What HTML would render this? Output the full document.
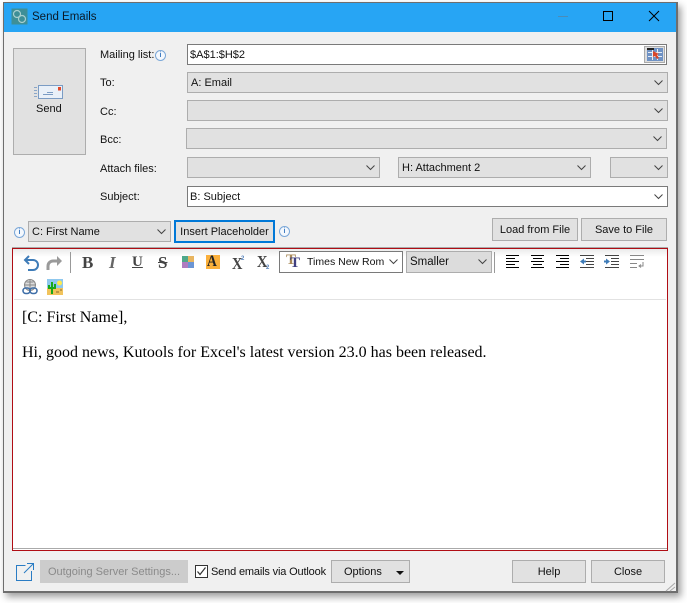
<!DOCTYPE html>
<html><head><meta charset="utf-8"><style>
html,body{margin:0;padding:0;background:#fff;width:687px;height:603px;overflow:hidden}
*{box-sizing:border-box}
body{font-family:"Liberation Sans",sans-serif;font-size:11px;color:#111;position:relative}
.a{position:absolute}
.t{position:absolute;white-space:nowrap;line-height:14px;height:14px}
.b{position:absolute;background:#e1e1e1;border:1px solid #adadad;white-space:nowrap;line-height:21px;padding-left:3px}
.w{background:#fff;border-color:#7a7a7a}
.c{text-align:center;padding:0}
.ch{position:absolute;right:4px;top:7px;width:9px;height:6px}
.i{position:absolute;width:11px;height:11px;border:1px solid #7aa7d8;border-radius:50%;background:#f4f8fd;color:#3a78c0;font:bold 7px/9px "Liberation Sans",sans-serif;text-align:center}
</style></head><body>
<!-- shadow -->
<div class="a" style="left:3px;top:2px;width:675px;height:591px;box-shadow:3px 4px 7px rgba(0,0,0,.38)"></div>
<!-- window -->
<div class="a" style="left:3px;top:2px;width:675px;height:591px;background:#f0f0f0;border:1px solid #6e6e6e;border-width:1px 2px 2px 1px"></div>
<div class="a" style="left:4px;top:3px;width:672px;height:29px;background:#27a5f4"></div>
<svg class="a" style="left:11px;top:8px" width="17" height="17" viewBox="0 0 17 17"><rect width="16" height="16" x=".5" y=".5" fill="#3e8f97"/><circle cx="6" cy="6" r="3.500" fill="none" stroke="#a9cfcf" stroke-width="1.200"/><circle cx="11" cy="11" r="3.500" fill="none" stroke="#a9cfcf" stroke-width="1.200"/></svg>
<div class="t" style="left:32px;top:10px;font-size:11.5px;color:#0a1a28">Send Emails</div>
<div class="a" style="left:558px;top:16px;width:10px;height:1px;background:#4a8cb8"></div>
<div class="a" style="left:603px;top:11px;width:10px;height:10px;border:1px solid #000"></div>
<svg class="a" style="left:648px;top:10px" width="12" height="12" viewBox="0 0 12 12"><path d="M1 1L11 11M11 1L1 11" stroke="#000" stroke-width="1" fill="none"/></svg>

<!-- Send -->
<div class="b c" style="left:13px;top:48px;width:73px;height:107px"></div>
<svg class="a" style="left:33px;top:84px" width="31" height="16" viewBox="0 0 31 16"><rect x="5.500" y="1.500" width="24" height="13" fill="#e9f0f8" stroke="#7b9cc4"/><path d="M10 10.500h10M14 8.500h6" stroke="#7b9cc4"/><rect x="25" y="3" width="3" height="3.500" fill="#e2492a"/><path d="M1 3.500h3M1 6.500h3M1 9.500h3M1 12.500h3" stroke="#8aa6c8"/></svg>
<div class="t" style="left:36px;top:101px;top:102px">Send</div>

<!-- labels -->
<div class="t" style="left:100px;top:48px">Mailing list:</div>
<div class="i" style="left:155px;top:50px">i</div>
<div class="t" style="left:100px;top:76px">To:</div>
<div class="t" style="left:100px;top:105px">Cc:</div>
<div class="t" style="left:100px;top:133px">Bcc:</div>
<div class="t" style="left:100px;top:162px">Attach files:</div>
<div class="t" style="left:100px;top:190px">Subject:</div>

<!-- fields -->
<div class="b w" style="left:187px;top:44px;width:480px;height:21px;line-height:20px;padding-left:2px">$A$1:$H$2</div>
<div class="a" style="left:644px;top:46px;width:21px;height:17px;background:#dcdcdc;border:1px solid #aaa"></div>
<svg class="a" style="left:647px;top:48px" width="16" height="13" viewBox="0 0 16 13"><rect width="16" height="13" fill="#6f92c4"/><path d="M1 4.500h14M1 8.500h14M5.500 1v11M10.500 1v11" stroke="#e8eef6" stroke-width="1"/><rect x="0" y="0" width="7" height="2" fill="#222"/><path d="M6 3l6 3-2 1 2 3-2 1-2-3-2 1z" fill="#d8462a"/></svg>

<div class="b" style="left:187px;top:72px;width:481px;height:21px">A: Email<svg class="ch" viewBox="0 0 9 6"><path d="M.5.5l4 4 4-4" fill="none" stroke="#444" stroke-width="1"/></svg></div>
<div class="b" style="left:187px;top:100px;width:481px;height:21px"><svg class="ch" viewBox="0 0 9 6"><path d="M.5.5l4 4 4-4" fill="none" stroke="#444" stroke-width="1"/></svg></div>
<div class="b" style="left:186px;top:128px;width:481px;height:21px"><svg class="ch" viewBox="0 0 9 6"><path d="M.5.5l4 4 4-4" fill="none" stroke="#444" stroke-width="1"/></svg></div>
<div class="b" style="left:187px;top:157px;width:193px;height:21px"><svg class="ch" viewBox="0 0 9 6"><path d="M.5.5l4 4 4-4" fill="none" stroke="#444" stroke-width="1"/></svg></div>
<div class="b" style="left:398px;top:157px;width:193px;height:21px">H: Attachment 2<svg class="ch" viewBox="0 0 9 6"><path d="M.5.5l4 4 4-4" fill="none" stroke="#444" stroke-width="1"/></svg></div>
<div class="b" style="left:610px;top:157px;width:58px;height:21px"><svg class="ch" viewBox="0 0 9 6"><path d="M.5.5l4 4 4-4" fill="none" stroke="#444" stroke-width="1"/></svg></div>
<div class="b w" style="left:187px;top:186px;width:481px;height:21px;padding-left:2px">B: Subject<svg class="ch" viewBox="0 0 9 6"><path d="M.5.5l4 4 4-4" fill="none" stroke="#444" stroke-width="1"/></svg></div>

<!-- placeholder row -->
<div class="i" style="left:14px;top:227px">i</div>
<div class="b" style="left:28px;top:221px;width:143px;height:21px">C: First Name<svg class="ch" viewBox="0 0 9 6"><path d="M.5.5l4 4 4-4" fill="none" stroke="#444" stroke-width="1"/></svg></div>
<div class="b c" style="left:174px;top:220px;width:101px;height:23px;border:2px solid #0078d7;line-height:20px">Insert Placeholder</div>
<div class="i" style="left:279px;top:226px">i</div>
<div class="b c" style="left:492px;top:218px;width:86px;height:23px;line-height:22px">Load from File</div>
<div class="b c" style="left:581px;top:218px;width:86px;height:23px;line-height:22px">Save to File</div>

<!-- editor -->
<div class="a" style="left:12px;top:247px;width:656px;height:1px;background:#aaa"></div>
<div class="a" style="left:12px;top:248px;width:656px;height:303px;background:#fff;border:1px solid #b00d14"></div>
<div class="a" style="left:13px;top:548px;width:654px;height:1px;background:#aaa"></div>
<div class="a" style="left:14px;top:299px;width:652px;height:1px;background:#e2e2e2"></div>
<div class="a" style="left:13px;top:249px;width:654px;height:8px;background:linear-gradient(#ebebeb,#fff)"></div>
<!-- toolbar -->
<svg class="a" style="left:22px;top:254px" width="42" height="18" viewBox="0 0 42 18"><path d="M3 6h8a5 5 0 0 1 0 10H6M7 2L3 6l4 4" fill="none" stroke="#3f7cb8" stroke-width="2"/><path d="M38 7h-7a5 5 0 0 0-5 5v4" fill="none" stroke="#9a9a9a" stroke-width="3"/><path d="M35 2l5 5-5 5z" fill="#9a9a9a"/></svg>
<div class="a" style="left:70px;top:252px;width:1px;height:21px;background:#999"></div>
<div class="t" style="left:82px;top:254px;height:18px;font:bold 17px/18px 'Liberation Serif',serif;color:#444">B</div>
<div class="t" style="left:109px;top:254px;height:18px;font:italic bold 17px/18px 'Liberation Serif',serif;color:#666">I</div>
<div class="t" style="left:132px;top:254px;height:18px;font:bold 15px/17px 'Liberation Serif',serif;color:#444;text-decoration:underline">U</div>
<div class="t" style="left:158px;top:254px;height:18px;font:bold 17px/18px 'Liberation Serif',serif;color:#444;text-decoration:line-through">S</div>
<svg class="a" style="left:182px;top:256px" width="12" height="12" viewBox="0 0 12 12"><rect width="6" height="6" fill="#4fa88a"/><rect x="6" width="6" height="6" fill="#e8b560"/><rect y="6" width="6" height="6" fill="#b07cc0"/><rect x="6" y="6" width="6" height="6" fill="#6b95d4"/></svg>
<div class="a" style="left:206px;top:255px;width:14px;height:14px;background:#fbb03b"></div>
<div class="t" style="left:207px;top:254px;height:16px;font:bold 16px/16px 'Liberation Serif',serif;color:#222;transform:scaleX(.85);transform-origin:left">A</div>
<div class="t" style="left:232px;top:255px;height:18px;font:bold 17px/18px 'Liberation Serif',serif;color:#444;transform:scaleX(.85);transform-origin:left">X</div>
<div class="t" style="left:241px;top:255px;font:bold 6px/8px 'Liberation Sans',sans-serif;color:#5a85bd">2</div>
<div class="t" style="left:257px;top:253px;height:18px;font:bold 17px/18px 'Liberation Serif',serif;color:#444;transform:scaleX(.85);transform-origin:left">X</div>
<div class="t" style="left:266px;top:264px;font:bold 6px/8px 'Liberation Sans',sans-serif;color:#5a85bd">2</div>
<div class="b w" style="left:279px;top:251px;width:124px;height:22px;padding-left:0"><span class="a" style="left:6px;top:1px;font:bold 15px/15px 'Liberation Serif',serif;color:#a98a5a">T</span><span class="a" style="left:10px;top:4px;font:bold 15px/15px 'Liberation Serif',serif;color:#3f3f80">T</span><span class="a" style="left:27px;top:0;font-size:10.500px">Times New Rom</span><svg class="ch" viewBox="0 0 9 6"><path d="M.5.5l4 4 4-4" fill="none" stroke="#444" stroke-width="1"/></svg></div>
<div class="b" style="left:406px;top:251px;width:86px;height:22px;background:#dcdcdc;font-size:11.500px">Smaller<svg class="ch" viewBox="0 0 9 6"><path d="M.5.5l4 4 4-4" fill="none" stroke="#444" stroke-width="1"/></svg></div>
<div class="a" style="left:494px;top:252px;width:1px;height:21px;background:#999"></div>
<svg class="a" style="left:505px;top:255px" width="140" height="15" viewBox="0 0 140 15"><g stroke="#000" fill="none"><path d="M1 .5h13M1 3.500h9M1 6.500h13M1 9.500h9M1 12.500h13"/><path d="M26 .5h13M28 3.500h9M26 6.500h13M28 9.500h9M26 12.500h13"/><path d="M51 .5h13M55 3.500h9M51 6.500h13M55 9.500h9M51 12.500h13"/></g><g stroke="#444" fill="none"><path d="M75 .5h14M81 3.500h8M81 6.500h8M81 9.500h8M75 12.500h14"/><path d="M100 .5h14M106 3.500h8M106 6.500h8M106 9.500h8M100 12.500h14"/></g><path d="M75 6.500l4-3v2h2v2h-2v2z" fill="#3f7cb8"/><path d="M105 6.500l-4-3v2h-2v2h2v2z" fill="#3f7cb8"/><path d="M125 .5h14M125 4.500h14M125 8.500h7M125 12.500h7M138 7v4h-4M136 9.500l-2 1.500 2 1.500" fill="none" stroke="#888"/></svg>
<svg class="a" style="left:22px;top:279px" width="16" height="16" viewBox="0 0 16 16"><circle cx="8" cy="6" r="5.500" fill="#ddd" stroke="#888"/><path d="M2.500 6h11M8 .5v11M4.500 3h7" stroke="#888" fill="none"/><rect x="1" y="9" width="7" height="5.500" rx="2.700" fill="none" stroke="#3f6fa8" stroke-width="1.600"/><rect x="8" y="9" width="7" height="5.500" rx="2.700" fill="none" stroke="#3f6fa8" stroke-width="1.600"/></svg>
<svg class="a" style="left:47px;top:279px" width="16" height="16" viewBox="0 0 16 16"><rect width="16" height="16" fill="#8fc8ee"/><rect y="9" width="16" height="7" fill="#f1c35c"/><circle cx="12.500" cy="4" r="2.500" fill="#ffe94a"/><path d="M5 15V3M2 6v3h6V5" fill="none" stroke="#18a818" stroke-width="2"/><path d="M9 13h3M13 11h2" stroke="#8a6a2a"/></svg>

<!-- body text -->
<div class="t" style="left:22px;top:309px;height:18px;font:16px/18px 'Liberation Serif',serif;color:#000">[C: First Name],</div>
<div class="t" style="left:22px;top:344px;height:18px;font:16px/18px 'Liberation Serif',serif;color:#000">Hi, good news, Kutools for Excel's latest version 23.0 has been released.</div>

<!-- bottom -->
<svg class="a" style="left:16px;top:563px" width="18" height="18" viewBox="0 0 18 18"><path d="M9.500 2.500H.5v15h15V8M8 10l9-9M11 .5h6.500V7" fill="none" stroke="#2a7cc4" stroke-width="1"/></svg>
<div class="b c" style="left:40px;top:560px;width:148px;height:23px;background:#ccc;border-color:#ccc;color:#8a8a8a;line-height:22px">Outgoing Server Settings...</div>
<div class="a" style="left:195px;top:565px;width:13px;height:13px;background:#fff;border:1px solid #333"></div>
<svg class="a" style="left:196px;top:566px" width="11" height="11" viewBox="0 0 11 11"><path d="M1.500 5.500l2.500 3 5.500-7" fill="none" stroke="#333" stroke-width="1.200"/></svg>
<div class="t" style="left:211px;top:565px;letter-spacing:-.16px">Send emails via Outlook</div>
<div class="b" style="left:331px;top:560px;width:79px;height:23px;padding-left:12px;line-height:22px">Options</div>
<div class="a" style="left:396px;top:571px;width:0;height:0;border-left:4px solid transparent;border-right:4px solid transparent;border-top:4px solid #111"></div>
<div class="b c" style="left:512px;top:560px;width:74px;height:23px;line-height:22px">Help</div>
<div class="b c" style="left:591px;top:560px;width:74px;height:23px;line-height:22px">Close</div>
<svg class="a" style="left:665px;top:582px" width="11" height="10" viewBox="0 0 11 10"><path d="M1 9l9-8M5 9l5-4" stroke="#aaa" fill="none"/></svg>
</body></html>
